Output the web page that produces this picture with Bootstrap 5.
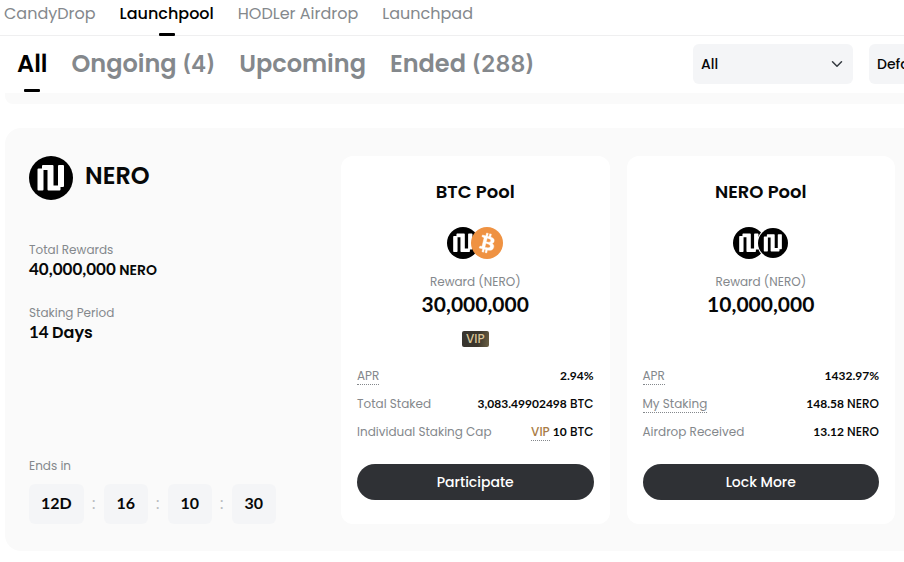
<!DOCTYPE html>
<html lang="en">
<head>
<meta charset="utf-8">
<meta name="viewport" content="width=device-width, initial-scale=1">
<title>Launchpool</title>
<link href="https://cdn.jsdelivr.net/npm/bootstrap@5.3.0/dist/css/bootstrap.min.css" rel="stylesheet">
<style>
body { font-family: Poppins, Inter, sans-serif; color: #070808; font-size: 12px; line-height: 20px; overflow-x: hidden; }
a { text-decoration: none; color: #84888c; }
.num { font-family: Lato, "Liberation Sans", sans-serif; font-variant-numeric: tabular-nums; }
.products { height: 36px; gap: 24px; padding-left: 4px; border-bottom: 1px solid #efeff0; }
.products a { font-size: 16px; line-height: 28px; }
.products a, .stages a { display: flex; flex-direction: column; justify-content: space-between; align-items: center; white-space: nowrap; }
a.current { color: #000; font-weight: 500; }
a.current::after { content: ""; width: 16px; height: 3px; border-radius: 1px; background: #000; }
.products a.current { height: 36px; }
.toolbar { height: 57px; padding-left: 17px; }
.stages { gap: 24px; }
.stages a { height: 56px; font-size: 24px; line-height: 55px; font-weight: 600; }
.stages .num { font-family: Inter, sans-serif; font-size: 23px; line-height: 1; }
.stages a.current::after { flex: none; margin-top: -3px; }
.filters { flex: 0 0 211px; gap: 16px; overflow: hidden; padding: 8px 0 9px; }
.filters .form-select { flex: 0 0 160px; height: 40px; border: 0; border-radius: 6px; padding: 0 8px; background-color: #f4f5f7; background-position: right 10px center; background-size: 12px; font-size: 14px; font-weight: 500; color: #070808; }
.strip { height: 11px; margin-left: 5px; background: #fafafa; border-bottom-left-radius: 8px; }
.project { margin: 24px 0 0 5px; padding: 28px 9px 27px 24px; background: #fafafa; border-radius: 16px 0 0 16px; display: grid; grid-template-columns: minmax(250px, 295px) 1fr 1fr; column-gap: 17px; }
.soft { color: #84888c; }
.project-name { font-size: 24px; line-height: 40px; font-weight: 600; }
.fact { font-size: 14px; font-weight: 600; line-height: 18px; }
.fact .num { font-size: 17px; font-weight: 700; line-height: 1; }
.fact .unit { font-size: 16px; line-height: 1; }
.clock { gap: 7px; }
.clock span { background: #f4f5f7; border-radius: 6px; height: 40px; line-height: 38px; min-width: 44px; padding: 0 12px; text-align: center; font-size: 16px; font-weight: 700; }
.clock i { font-style: normal; font-size: 16px; width: 6px; text-align: center; color: #b8bbbf; }
.pool { background: #fff; border-radius: 12px; padding: 24px 16px; display: flex; flex-direction: column; }
.pool h2 { font-size: 18px; line-height: 24px; font-weight: 600; margin: 0 0 23px; }
.coins { height: 32px; margin-bottom: 13px; }
.coins svg + svg { margin-left: -8px; }
.amount { font-size: 21px; line-height: 24px; font-weight: 700; }
.vip-slot { height: 16px; margin: 15px 0 19px; }
.vip-tag { width: 27px; height: 16px; border-radius: 2px; line-height: 16px; font-weight: 500; color: #d9c596; background: linear-gradient(100deg, #37342f, #3b362c 60%, #6b6043); }
.terms { gap: 8px; margin: 0 0 22px; }
.terms dt { font-weight: 400; color: #84888c; }
.terms dd { margin: 0; font-weight: 500; }
.terms .num { font-weight: 700; line-height: 1; }
.hint { display: inline-block; line-height: 16px; border-bottom: 1px dotted #84888c; }
.hint.gold { color: #a97c46; }
.pool .btn { --bs-btn-bg: #2f3135; --bs-btn-color: #fff; --bs-btn-hover-bg: #44474c; --bs-btn-hover-color: #fff; height: 36px; padding: 0; font-size: 14px; line-height: 32px; font-weight: 500; }
</style>
</head>
<body>
<svg class="d-none">
  <symbol id="nero" viewBox="0 0 44 44">
    <circle cx="22" cy="22" r="22" fill="#000"/>
    <path d="M8.500 13.500q0-1 1-1H13V10q0-1 1-1H23.500q1 0 1 1V29.500h4.500V10q0-1 1-1H34q1 0 1 1V30q0 1-1 1H31.500V33.500q0 1-1 1H19.500q-1 0-1-1V14H14.500V33.500q0 1-1 1H9.500q-1 0-1-1Z" fill="#fff"/>
  </symbol>
  <symbol id="bitcoin" viewBox="0 0 32 32">
    <circle cx="16" cy="16" r="16" fill="#ef9242"/>
    <path fill="#fff" stroke="#fff" stroke-width=".4" d="M23.189 14.020c.314-2.096-1.283-3.223-3.465-3.975l.708-2.840-1.728-.430-.690 2.765c-.454-.114-.920-.220-1.385-.326l.695-2.783L15.596 6l-.708 2.839c-.376-.086-.746-.170-1.104-.260l.002-.009-2.384-.595-.460 1.846s1.283.294 1.256.312c.700.175.826.638.805 1.006l-.806 3.235c.048.012.110.030.180.057l-.183-.045-1.130 4.532c-.086.212-.303.531-.793.410.018.025-1.256-.313-1.256-.313l-.858 1.978 2.250.561c.418.105.828.215 1.231.318l-.715 2.872 1.727.430.708-2.840c.472.127.930.245 1.378.357l-.706 2.828 1.728.430.715-2.866c2.948.558 5.164.333 6.097-2.333.752-2.146-.037-3.385-1.588-4.192 1.130-.260 1.980-1.003 2.207-2.538zm-3.950 5.538c-.533 2.147-4.148.986-5.320.695l.950-3.805c1.172.293 4.929.872 4.370 3.110zm.535-5.569c-.487 1.953-3.495.960-4.470.717l.860-3.450c.975.243 4.118.696 3.610 2.733z"/>
  </symbol>
  <symbol id="nero-ringed" viewBox="0 0 32 32">
    <circle cx="16" cy="16" r="16" fill="#fff"/>
    <use href="#nero" x="1" y="1" width="30" height="30"/>
  </symbol>
</svg>
<nav class="products d-flex" aria-label="Products">
  <a href="#">CandyDrop</a>
  <a href="#" class="current" aria-current="page">Launchpool</a>
  <a href="#">HODLer Airdrop</a>
  <a href="#">Launchpad</a>
</nav>
<div class="toolbar d-flex justify-content-between">
  <nav class="stages d-flex" aria-label="Stages">
    <a href="#" class="current fw-semibold" aria-current="true">All</a>
    <a href="#"><span>Ongoing <span class="num">(4)</span></span></a>
    <a href="#">Upcoming</a>
    <a href="#"><span>Ended <span class="num">(288)</span></span></a>
  </nav>
  <div class="filters d-flex">
    <select class="form-select" aria-label="Pool type"><option>All</option></select>
    <select class="form-select" aria-label="Sort order"><option>Default</option></select>
  </div>
</div>
<div class="strip"></div>
<main class="project">
  <section class="d-flex flex-column">
    <div class="d-flex gap-2 mb-4 pb-3">
      <svg class="me-1" width="44" height="44" aria-hidden="true"><use href="#nero"/></svg>
      <h1 class="project-name mb-0">NERO</h1>
    </div>
    <div class="soft">Total Rewards</div>
    <div class="fact mb-4"><span class="num">40,000,000</span> NERO</div>
    <div class="soft">Staking Period</div>
    <div class="fact"><span class="num">14</span> <span class="unit">Days</span></div>
    <div class="mt-auto">
      <div class="soft mb-2">Ends in</div>
      <div class="clock d-flex align-items-center">
        <span class="num">12D</span><i>:</i><span class="num">16</span><i>:</i><span class="num">10</span><i>:</i><span class="num">30</span>
      </div>
    </div>
  </section>
  <section class="pool text-center">
    <h2>BTC Pool</h2>
    <div class="coins d-flex justify-content-center">
      <svg width="32" height="32" aria-hidden="true"><use href="#nero"/></svg>
      <svg width="32" height="32" aria-hidden="true"><use href="#bitcoin"/></svg>
    </div>
    <div class="soft">Reward (NERO)</div>
    <div class="amount num">30,000,000</div>
    <div class="vip-slot d-flex justify-content-center"><span class="vip-tag">VIP</span></div>
    <dl class="terms d-flex flex-column">
      <div class="d-flex justify-content-between"><dt><span class="hint">APR</span></dt><dd><span class="num">2.94%</span></dd></div>
      <div class="d-flex justify-content-between"><dt>Total Staked</dt><dd><span class="num">3,083.49902498</span> BTC</dd></div>
      <div class="d-flex justify-content-between"><dt>Individual Staking Cap</dt><dd><span class="hint gold">VIP</span> <span class="num">10</span> BTC</dd></div>
    </dl>
    <button type="button" class="btn rounded-pill w-100 mt-auto">Participate</button>
  </section>
  <section class="pool text-center">
    <h2>NERO Pool</h2>
    <div class="coins d-flex justify-content-center">
      <svg width="32" height="32" aria-hidden="true"><use href="#nero"/></svg>
      <svg width="32" height="32" aria-hidden="true"><use href="#nero-ringed"/></svg>
    </div>
    <div class="soft">Reward (NERO)</div>
    <div class="amount num">10,000,000</div>
    <div class="vip-slot"></div>
    <dl class="terms d-flex flex-column">
      <div class="d-flex justify-content-between"><dt><span class="hint">APR</span></dt><dd><span class="num">1432.97%</span></dd></div>
      <div class="d-flex justify-content-between"><dt><span class="hint">My Staking</span></dt><dd><span class="num">148.58</span> NERO</dd></div>
      <div class="d-flex justify-content-between"><dt>Airdrop Received</dt><dd><span class="num">13.12</span> NERO</dd></div>
    </dl>
    <button type="button" class="btn rounded-pill w-100 mt-auto">Lock More</button>
  </section>
</main>
<script src="https://cdn.jsdelivr.net/npm/bootstrap@5.3.0/dist/js/bootstrap.bundle.min.js"></script>
</body>
</html>
